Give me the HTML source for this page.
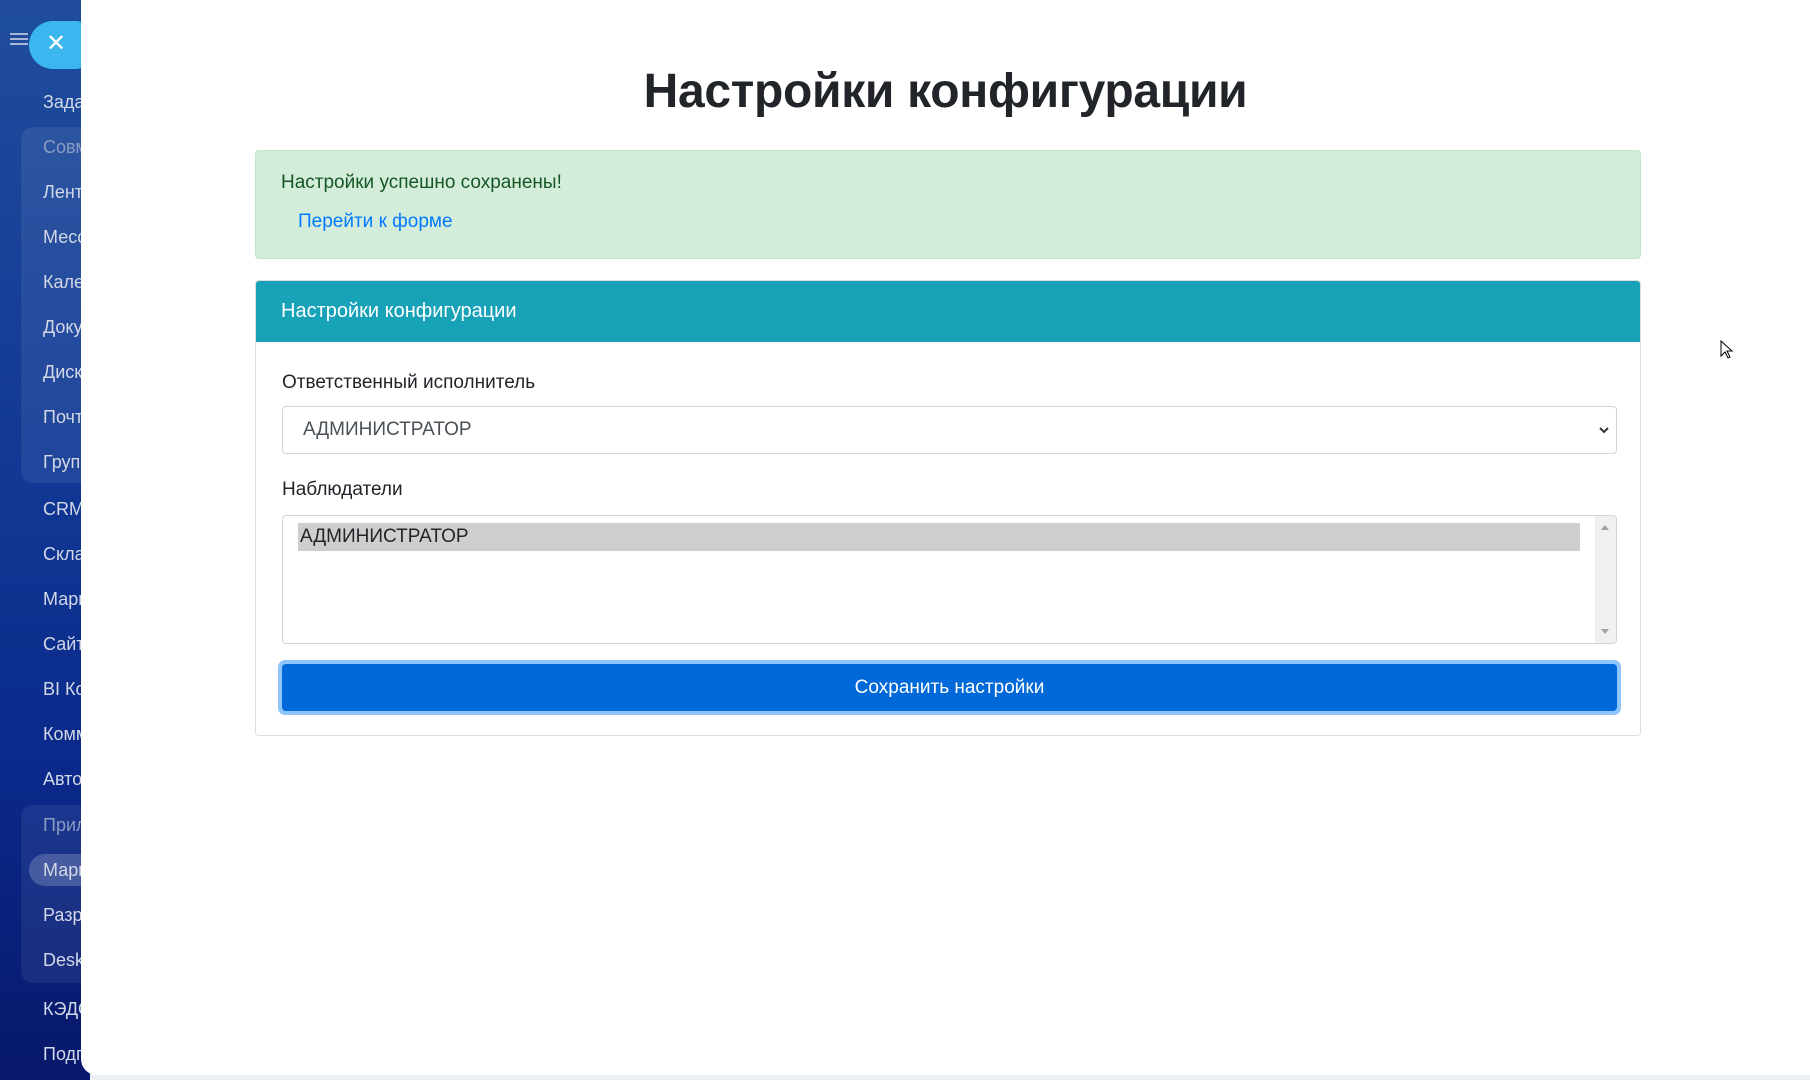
<!DOCTYPE html>
<html><head><meta charset="utf-8"><style>
*{box-sizing:border-box;margin:0;padding:0}
body{width:1810px;height:1080px;overflow:hidden;background:#eef1f4;font-family:"Liberation Sans",sans-serif;position:relative}
#sb{position:absolute;left:0;top:0;width:90px;height:1080px;background:linear-gradient(180deg,#1f4d9c 0%,#123a95 40%,#0a2a8c 70%,#08186a 100%)}
.it{position:absolute;left:43px;color:#d3d8e6;font-size:18px;line-height:20px;white-space:nowrap}
.grp{position:absolute;left:21px;width:80px;background:rgba(255,255,255,0.07);border-radius:12px}
#main{position:absolute;left:81px;top:0;width:1729px;height:1075px;background:#fff;border-radius:0 0 0 16px}
h1{position:absolute;left:0;width:1729px;top:64px;text-align:center;font-size:48px;font-weight:bold;color:#212529;letter-spacing:-0.3px}
.alert{position:absolute;left:255px;top:150px;width:1386px;height:109px;background:#d4edda;border:1px solid #c3e6cb;border-radius:4px}
.card{position:absolute;left:255px;top:280px;width:1386px;height:456px;border:1px solid #dcdfe2;border-radius:4px}
.ch{height:61px;background:#17a2b8;color:#fff;font-size:20px;padding-left:25px;line-height:61px;border-radius:3px 3px 0 0}
.lbl{position:absolute;left:26px;font-size:19px;color:#212529}
</style></head><body>
<div id="sb">
<div style="position:absolute;left:10px;top:33px;width:18px;height:2px;background:#aab6d6;box-shadow:0 5px 0 #aab6d6,0 10px 0 #aab6d6"></div>
<div style="position:absolute;left:29px;top:21px;width:70px;height:48px;border-radius:24px;background:#3cb6ee;color:#fff;font-size:24px;line-height:46px;padding-left:17px">✕</div>
<div class="grp" style="top:127px;height:356px"></div>
<div class="grp" style="top:805px;height:178px"></div>
<div style="position:absolute;left:29px;top:854px;width:70px;height:32px;border-radius:16px;background:rgba(255,255,255,0.2)"></div>
<div class="it" style="top:92px">Задачи</div>
<div class="it" style="top:137px;color:#8a9bc4">Совм</div>
<div class="it" style="top:182px">Лента</div>
<div class="it" style="top:227px">Месс</div>
<div class="it" style="top:272px">Кале</div>
<div class="it" style="top:317px">Доку</div>
<div class="it" style="top:362px">Диск</div>
<div class="it" style="top:407px">Почта</div>
<div class="it" style="top:452px">Груп</div>
<div class="it" style="top:499px">CRM</div>
<div class="it" style="top:544px">Скла</div>
<div class="it" style="top:589px">Марк</div>
<div class="it" style="top:634px">Сайт</div>
<div class="it" style="top:679px">BI Ко</div>
<div class="it" style="top:724px">Комм</div>
<div class="it" style="top:769px">Авто</div>
<div class="it" style="top:815px;color:#8a9bc4">Прил</div>
<div class="it" style="top:860px">Марк</div>
<div class="it" style="top:905px">Разр</div>
<div class="it" style="top:950px">Desk</div>
<div class="it" style="top:999px">КЭДО</div>
<div class="it" style="top:1044px">Подп</div>
</div>
<div id="main">
<h1>Настройки конфигурации</h1>
</div>
<div class="alert">
<div style="position:absolute;left:25px;top:21px;font-size:19px;color:#155724">Настройки успешно сохранены!</div>
<div style="position:absolute;left:42px;top:60px;font-size:19px;color:#007bff">Перейти к форме</div>
</div>
<div class="card">
<div class="ch">Настройки конфигурации</div>
<div class="lbl" style="top:91px">Ответственный исполнитель</div>
<div style="position:absolute;left:26px;top:125px;width:1335px;height:48px;border:1px solid #ced4da;border-radius:4px;font-size:19px;color:#495057;line-height:46px;padding-left:20px">АДМИНИСТРАТОР
<svg style="position:absolute;right:6px;top:17px" width="12" height="12" viewBox="0 0 12 12"><path d="M2 4l4 4 4-4" fill="none" stroke="#333" stroke-width="2"/></svg></div>
<div class="lbl" style="top:198px">Наблюдатели</div>
<div style="position:absolute;left:26px;top:234px;width:1335px;height:129px;border:1px solid #ced4da;border-radius:4px;overflow:hidden">
<div style="position:absolute;left:15px;top:7px;width:1282px;height:28px;background:#cecece;font-size:19px;color:#212529;line-height:28px;padding-left:2px">АДМИНИСТРАТОР</div>
<div style="position:absolute;right:0;top:0;width:21px;height:127px;background:#f0f0f0">
<div style="position:absolute;left:6px;top:9px;border:4px solid transparent;border-bottom:5px solid #a3a3a3;border-top:0"></div>
<div style="position:absolute;left:6px;bottom:9px;border:4px solid transparent;border-top:5px solid #a3a3a3;border-bottom:0"></div>
</div></div>
<div style="position:absolute;left:22px;top:379px;width:1343px;height:55px;border-radius:7px;background:#8fc5fb"></div>
<div style="position:absolute;left:26px;top:383px;width:1335px;height:47px;border-radius:4px;background:#0069d9;color:#fff;text-align:center;font-size:19px;line-height:47px">Сохранить настройки</div>
</div>
<svg style="position:absolute;left:1720px;top:340px" width="14" height="20" viewBox="0 0 14 20"><path d="M1 1v15l4-4 3 6 2-1-3-6h5z" fill="#fff" stroke="#000" stroke-width="1"/></svg>
</body></html>
